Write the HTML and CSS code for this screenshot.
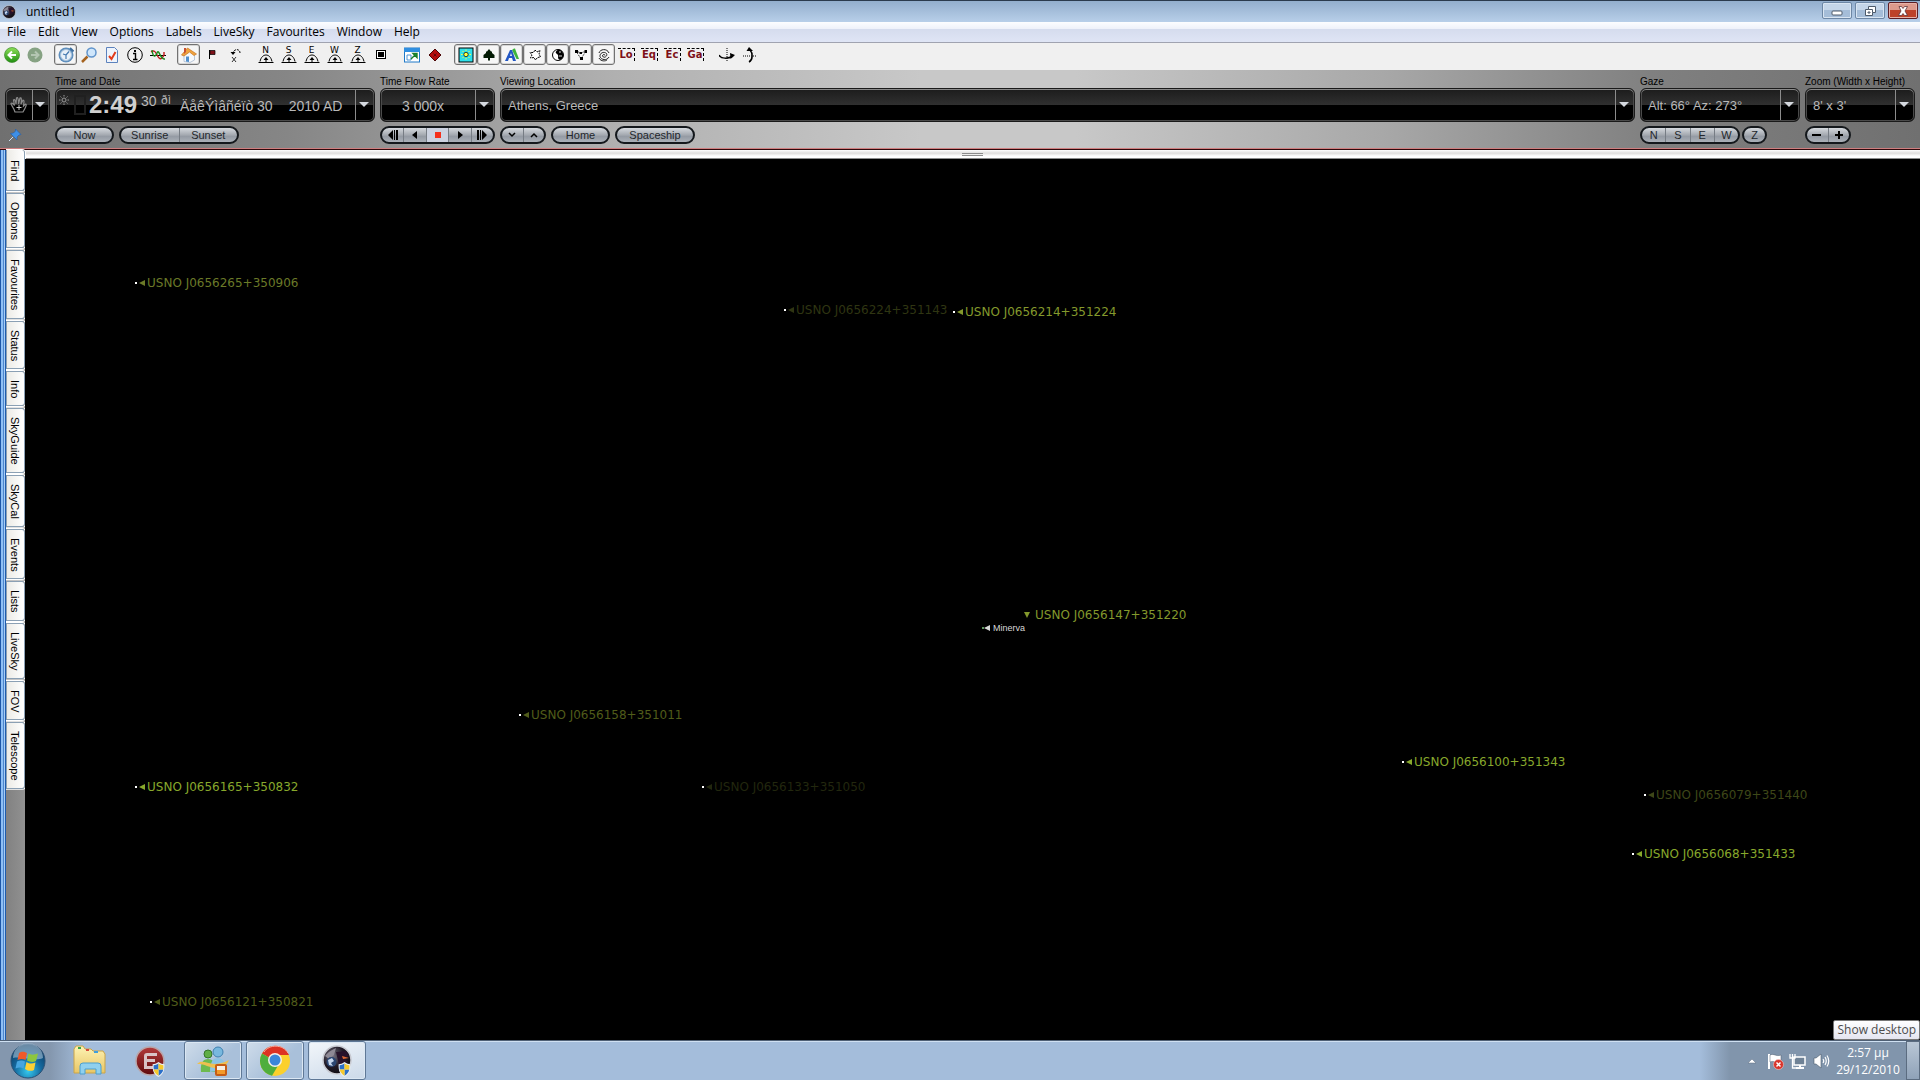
FILE: index.html
```html
<!DOCTYPE html>
<html lang="en">
<head>
<meta charset="utf-8">
<title>untitled1</title>
<link rel="stylesheet" href="styles.css">
</head>
<body>
<svg class="defs" width="0" height="0" aria-hidden="true">
  <defs>
    <linearGradient id="gGreen" x1="0" y1="0" x2="0" y2="1"><stop offset="0" stop-color="#8fe05a"/><stop offset="1" stop-color="#1f8f10"/></linearGradient>
    <radialGradient id="gOrb" cx=".5" cy=".8" r=".8"><stop offset="0" stop-color="#35c8ee"/><stop offset=".5" stop-color="#14679c"/><stop offset="1" stop-color="#0c3358"/></radialGradient>
    <radialGradient id="gPlanet" cx=".35" cy=".35" r=".8"><stop offset="0" stop-color="#75707e"/><stop offset=".5" stop-color="#201a26"/><stop offset="1" stop-color="#07060a"/></radialGradient>
    <linearGradient id="gFolder" x1="0" y1="0" x2="0" y2="1"><stop offset="0" stop-color="#fdf3b4"/><stop offset="1" stop-color="#e9c665"/></linearGradient>
    <linearGradient id="gRed" x1="0" y1="0" x2="0" y2="1"><stop offset="0" stop-color="#b33a3a"/><stop offset="1" stop-color="#5f0a0c"/></linearGradient>
    <symbol id="shield" viewBox="0 0 12 14"><path d="M6 0C4 1.500 2 2 0.500 2C0.300 8 1.500 11.500 6 14C10.500 11.500 11.700 8 11.500 2C10 2 8 1.500 6 0Z" fill="#e9eef3"/><path d="M6 1.500V7H1.600C1.400 5.500 1.400 4.500 1.500 3C3 3 4.500 2.500 6 1.500ZM6 7H10.400C10 9.500 8.500 11.500 6 12.800Z" fill="#2a6fc9"/><path d="M6 1.500V7H10.400C10.600 5.500 10.600 4.500 10.500 3C9 3 7.500 2.500 6 1.500ZM6 7H1.600C2 9.500 3.500 11.500 6 12.800Z" fill="#f6c92c"/></symbol>
    <symbol id="dome" viewBox="0 0 16 10"><path d="M.5 8.500H15.500M2 7.500C3 3 5.500 1 8 1S13 3 14 7.500" fill="none" stroke="#000"/><path d="M8 3L10.500 6H8.500V8H7.500V6H5.500Z"/></symbol>
    <symbol id="planet" viewBox="0 0 30 30"><circle cx="15" cy="15" r="14" fill="url(#gPlanet)" stroke="#c9cbd2" stroke-width="1.500"/><path d="M3 11C7 6 12 4 14 3L12 10L7 14Z" fill="#8e8995"/><path d="M14 7L24 6L27 11L22 13L26 17L17 20Z" fill="#27122a"/><path d="M20 11L27 13L21 14Z" fill="#e06a32"/><circle cx="9.500" cy="17" r="5" fill="#2b4672"/><path d="M6 15L10 13L12 16L9 18L11 21L7 20Z" fill="#c6d6ec"/></symbol>
  </defs>
</svg>
<div class="window">
  <header class="titlebar">
    <svg class="app-icon" viewBox="0 0 30 30"><use href="#planet"/></svg>
    <h1>untitled1</h1>
    <div class="caption">
      <button aria-label="Minimise"><svg viewBox="0 0 14 12"><rect x="2" y="6" width="10" height="4" rx="1" fill="#fff" stroke="#4e5b6b"/></svg></button>
      <button aria-label="Restore"><svg viewBox="0 0 14 12"><path d="M5.500 1.500H12.500V7.500H9.500V10.500H2.500V4.500H5.500Z" fill="#fff" stroke="#4e5b6b"/><path d="M5.500 4.500H9.500V7.500M5 7H7V8H5Z" fill="none" stroke="#4e5b6b"/></svg></button>
      <button class="close" aria-label="Close"><svg viewBox="0 0 14 12"><path d="M3 1.500H5.500L7 3.500L8.500 1.500H11.500L9 6L11.500 10.500H8.500L7 8.500L5.500 10.500H2.500L5 6Z" fill="#fff" stroke="#5e3438" stroke-width=".8"/></svg></button>
    </div>
  </header>
  <nav class="menu">
    <button>File</button><button>Edit</button><button>View</button><button>Options</button><button>Labels</button><button>LiveSky</button><button>Favourites</button><button>Window</button><button>Help</button>
  </nav>
  <div class="toolbar" role="toolbar">
    <div class="group">
      <button aria-label="Back"><svg viewBox="0 0 16 16"><circle cx="8" cy="8" r="7.500" fill="url(#gGreen)" stroke="#3d8a2b" stroke-width=".7"/><path d="M12 8H5M8 4.500L4.500 8L8 11.500" fill="none" stroke="#fff" stroke-width="2"/></svg></button>
      <button aria-label="Forward"><svg viewBox="0 0 16 16"><circle cx="8" cy="8" r="7.500" fill="#86a283"/><path d="M4 8H11M8 4.500L11.500 8L8 11.500" fill="none" stroke="#b4c6b2" stroke-width="2"/></svg></button>
    </div>
    <div class="group">
      <button class="on" aria-label="Time"><svg viewBox="0 0 16 16"><circle cx="8" cy="8" r="7.500" fill="#5f8fbd"/><circle cx="8" cy="8" r="5.500" fill="#e8f0f8" stroke="#a9c3dc"/><path d="M8 8L11 4.500M8 8L5 7M8 8V12" stroke="#4579b0" stroke-width="1.200"/><path d="M12 1L15.500 4.500" stroke="#3c6c9c" stroke-width="2"/></svg></button>
      <button aria-label="Search"><svg viewBox="0 0 16 16"><path d="M1 15L6.500 9.500" stroke="#a5631f" stroke-width="2.500"/><circle cx="10.500" cy="5.500" r="4.500" fill="#cfe6fb" stroke="#5f93cb" stroke-width="1.500"/></svg></button>
      <button aria-label="Check list"><svg viewBox="0 0 16 16"><path d="M2.500 .5H10.500L13.500 3.500V15.500H2.500Z" fill="#eef4fc" stroke="#5c82bd"/><path d="M5 9L7.500 12L11.500 5" fill="none" stroke="#e23c1c" stroke-width="2"/></svg></button>
      <button aria-label="Information"><svg viewBox="0 0 16 16"><circle cx="8" cy="8" r="7.300" fill="none" stroke="#000"/><path d="M6 6.500H8.500V12M6 12.500H10.500" stroke="#000" stroke-width="1.400" fill="none"/><rect x="7" y="3" width="2" height="2"/></svg></button>
      <button aria-label="Graph"><svg viewBox="0 0 16 16"><path d="M0 8.500H16" stroke="#000"/><path d="M1 5C4 3 5 4 7 8S11 14 14 8V5" fill="none" stroke="#c01818" stroke-width="1.400"/><path d="M2 3C3 10 5 11 7 6S10 13 15 12" fill="none" stroke="#1c8a1c" stroke-width="1.400"/></svg></button>
    </div>
    <div class="group">
      <button class="on" aria-label="Home view"><svg viewBox="0 0 16 16"><path d="M3 8V14.500L9 15.500L13.500 13V7L9 4Z" fill="#f6f8fb" stroke="#9fb3cb" stroke-width=".7"/><path d="M.5 8L6.500 1L15.500 7L13 8.500L8.500 5L3 9Z" fill="#f0a440" stroke="#c9741c" stroke-width=".7"/><path d="M3 1H5V5L3 7Z" fill="#c65034"/><path d="M5 9.500H8V15L5 14.500Z" fill="#5290cc"/></svg></button>
      <button aria-label="Flag"><svg viewBox="0 0 16 16"><path d="M5.500 3V12" stroke="#000"/><path d="M6 3.500H11V7.500H6Z" fill="#7d1018" stroke="#000" stroke-width=".7"/></svg></button>
      <button aria-label="Rotate"><svg viewBox="0 0 16 16"><path d="M13 6C13 1.500 7 1.500 6 6" fill="none" stroke="#000" stroke-dasharray="2 1"/><path d="M3.500 5H8.500L6 8Z"/><path d="M5 10L9 15M9 10L5 15" stroke="#000" stroke-width=".8"/></svg></button>
    </div>
    <div class="group compass">
      <button><span>N</span><svg viewBox="0 0 16 10"><use href="#dome"/></svg></button>
      <button><span>S</span><svg viewBox="0 0 16 10"><use href="#dome"/></svg></button>
      <button><span>E</span><svg viewBox="0 0 16 10"><use href="#dome"/></svg></button>
      <button><span>W</span><svg viewBox="0 0 16 10"><use href="#dome"/></svg></button>
      <button><span>Z</span><svg viewBox="0 0 16 10"><use href="#dome"/></svg></button>
      <button aria-label="Frame"><svg class="tall" viewBox="0 0 16 16"><rect x="3.500" y="3.500" width="9" height="8" fill="#fff" stroke="#000"/><rect x="5" y="5" width="6" height="5"/></svg></button>
    </div>
    <div class="group">
      <button aria-label="Full screen"><svg viewBox="0 0 16 16"><rect x=".5" y="1" width="15" height="14" fill="#fff" stroke="#1e79c8"/><rect x="0" y="1" width="16" height="4" fill="#2f8ee0"/><path d="M3 8H7V13H3Z" fill="#fff" stroke="#4c93d4"/><path d="M7 12L11 8M9 6.500H13V10.500Z" fill="#1a9c3a" stroke="#1a7c2a" stroke-width="1.400"/></svg></button>
      <button aria-label="Red marker"><svg viewBox="0 0 16 16"><path d="M8 2L14 8L8 14L2 8Z" fill="#b40d0d" stroke="#4c0505"/><path d="M6.500 6.500L9.500 9.500M9.500 6.500L6.500 9.500" stroke="#60080a"/></svg></button>
    </div>
    <div class="group">
      <button class="on" aria-label="Daylight"><svg viewBox="0 0 16 16"><rect x="1" y="1" width="14" height="14" fill="#2ee0ea" stroke="#000"/><circle cx="8" cy="7.500" r="2.200" fill="#ff4" stroke="#000" stroke-width=".7"/><path d="M8 2.500V4M8 11V12.500M3 7.500H4.500M11.500 7.500H13M4.500 4L5.500 5M10.500 10L11.500 11M11.500 4L10.500 5M5.500 10L4.500 11" stroke="#ff4"/></svg></button>
      <button class="on" aria-label="Horizon"><svg viewBox="0 0 16 16"><path d="M8 2L10 4.500H11V6L13.500 8V11H9V13.500H7V11H2.500V8L5 6V4.500H6Z" fill="#021a04"/></svg></button>
      <button class="on" aria-label="Labels"><svg viewBox="0 0 16 16"><path d="M8 3L10 1.500H11L15 12H12.500Z" fill="#3cb43c"/><path d="M1 14L6 3H8L12 14H9L8 11H5L4 14ZM6 9H8L7 6Z" fill="#2257c4" fill-rule="evenodd"/></svg></button>
      <button class="on" aria-label="Stars"><svg viewBox="0 0 16 16"><path d="M8 3L10 5L13 3.500L12 7L13.500 10L10.500 10.500L8.500 13L7 10.500L3.500 11L5 8L3 5.500L6.500 5.500Z" fill="#fff" stroke="#000" stroke-dasharray="2 .8"/></svg></button>
      <button class="on" aria-label="Planets"><svg viewBox="0 0 16 16"><circle cx="8" cy="8" r="5.500" fill="#fff" stroke="#000"/><path d="M8 2.500A5.500 5.500 0 0 1 10 13C6 11 10 9 7 7S7 4 8 2.500Z"/><path d="M9 5H11M9 9H12" stroke="#ddd"/></svg></button>
      <button class="on" aria-label="Constellations"><svg viewBox="0 0 16 16"><path d="M3 4L8 6L13 4L8 12Z" fill="none" stroke="#000" stroke-dasharray="1 1"/><path d="M2 3H5V6H2ZM11.500 3H14V6H11.500ZM6.500 5H9V7H6.500ZM7 10H10V13H7Z"/></svg></button>
      <button class="on" aria-label="Galaxies"><svg viewBox="0 0 16 16"><path d="M3 6C4 2 11 1 13 6M13 10C11 14 5 13 4 9.500C3.500 6 8 4 10.500 6.500C12 9 8 12 6.500 9C6.500 7 9 7 9 8.500M3 11C5 15 10 14 11 13" fill="none" stroke="#222"/></svg></button>
      <button class="grid-label">Lo</button>
      <button class="grid-label">Eq</button>
      <button class="grid-label">Ec</button>
      <button class="grid-label">Ga</button>
    </div>
    <div class="group">
      <button aria-label="Pan"><svg viewBox="0 0 16 16"><path d="M8 1V15" stroke="#000" stroke-dasharray="1 1"/><path d="M0 8C2 12 9 12 14 9" fill="none" stroke="#000" stroke-width="1.500"/><path d="M11 6L16 8L11.500 12Z"/></svg></button>
      <button aria-label="Tilt"><svg viewBox="0 0 16 16"><path d="M1 9H15" stroke="#000" stroke-dasharray="1 1"/><path d="M7 15C11 13 11 6 8 3" fill="none" stroke="#000" stroke-width="1.500"/><path d="M4.500 4L7 0L11 4Z"/></svg></button>
    </div>
  </div>

  <section class="panel">
    <div class="cell">
      <span class="label"></span>
      <div class="box">
        <div class="value hand"><svg viewBox="0 0 18 18"><path d="M5 16C4 12 1 9 1 7.500C2 6.500 3.500 8 4.500 9.500L3.500 4C4.500 3 5.500 4 6 8L6.500 2C7.500 1 8.500 2 8.500 8L10 2C11 1.500 12 2 11 8L13 4C14.500 4 14 6 13.500 10L15.500 8C17 8 16 11 13 16Z" fill="none" stroke="#8c8c8c" stroke-width="1.200"/><path d="M9 9V14M6.500 11.500H11.500" stroke="#c8c8c8"/></svg></div>
        <button class="drop" aria-label="Hand options"></button>
      </div>
      <div class="row"><svg class="pin" viewBox="0 0 14 14"><path d="M1 13L5.500 8.500" stroke="#cfe0f2"/><path d="M7.500 1L13 6.500L11 7L9 9L9 12L2.500 5.500L5.500 5L7.500 3Z" fill="#3e8fe6" stroke="#225ca8" stroke-width=".6"/></svg></div>
    </div>
    <div class="cell">
      <span class="label">Time and Date</span>
      <div class="box">
        <div class="value clock">
          <svg class="sun" viewBox="0 0 10 10"><circle cx="5" cy="5" r="2" fill="none" stroke="#999"/><path d="M5 0V1.500M5 8.500V10M0 5H1.500M8.500 5H10M1.500 1.500L2.500 2.500M7.500 7.500L8.500 8.500M8.500 1.500L7.500 2.500M2.500 7.500L1.500 8.500" stroke="#999"/></svg>
          <span class="ghost"></span><span class="hm">2:49</span><span class="sec">30</span><span class="ampm">ðì</span><span class="date">ÄåêÝìâñéïò 30</span><span class="date year">2010 AD</span>
        </div>
        <button class="drop" aria-label="Set time"></button>
      </div>
      <div class="row"><button class="pill w60">Now</button><div class="pills w120"><button>Sunrise</button><button>Sunset</button></div></div>
    </div>
    <div class="cell">
      <span class="label">Time Flow Rate</span>
      <div class="box"><div class="value rate">3 000x</div><button class="drop" aria-label="Set rate"></button></div>
      <div class="row"><div class="pills flow">
        <button aria-label="Step back"><svg viewBox="0 0 12 10"><path d="M6 0V10L1 5ZM7 0H8V10H7ZM9 0H11V10H9Z"/></svg></button>
        <button aria-label="Backward"><svg viewBox="0 0 12 10"><path d="M8 1V9L3 5Z"/></svg></button>
        <button class="stop" aria-label="Stop"><svg viewBox="0 0 12 10"><path d="M3 2H9V8H3Z" fill="#f5301c"/></svg></button>
        <button aria-label="Forward"><svg viewBox="0 0 12 10"><path d="M4 1V9L9 5Z"/></svg></button>
        <button aria-label="Step forward"><svg viewBox="0 0 12 10"><path d="M6 0V10L11 5ZM4 0H5V10H4ZM1 0H3V10H1Z"/></svg></button>
      </div></div>
    </div>
    <div class="cell">
      <span class="label">Viewing Location</span>
      <div class="box"><div class="value">Athens, Greece</div><button class="drop" aria-label="Set location"></button></div>
      <div class="row">
        <div class="pills w45">
          <button aria-label="Down"><svg viewBox="0 0 12 10"><path d="M3 3L6 6L9 3" fill="none" stroke="#000" stroke-width="1.500"/></svg></button>
          <button aria-label="Up"><svg viewBox="0 0 12 10"><path d="M3 7L6 4L9 7" fill="none" stroke="#000" stroke-width="1.500"/></svg></button>
        </div>
        <button class="pill w60">Home</button><button class="pill w80">Spaceship</button>
      </div>
    </div>
    <div class="cell">
      <span class="label">Gaze</span>
      <div class="box"><div class="value">Alt: 66° Az: 273°</div><button class="drop" aria-label="Set gaze"></button></div>
      <div class="row tight"><div class="pills w100"><button>N</button><button>S</button><button>E</button><button>W</button></div><button class="pill w25">Z</button></div>
    </div>
    <div class="cell">
      <span class="label">Zoom (Width x Height)</span>
      <div class="box"><div class="value">8' x 3'</div><button class="drop" aria-label="Set zoom"></button></div>
      <div class="row"><div class="pills w45">
        <button aria-label="Zoom out"><svg viewBox="0 0 12 10"><path d="M1 5H10" stroke="#000" stroke-width="2"/></svg></button>
        <button aria-label="Zoom in"><svg viewBox="0 0 12 10"><path d="M2 5H10M6 1V9" stroke="#000" stroke-width="2"/></svg></button>
      </div></div>
    </div>
  </section>

  <main class="body">
    <aside class="side">
      <button>Find</button><button>Options</button><button>Favourites</button><button>Status</button><button>Info</button><button>SkyGuide</button><button>SkyCal</button><button>Events</button><button>Lists</button><button>LiveSky</button><button>FOV</button><button>Telescope</button>
    </aside>
    <div class="view">
      <div class="splitter"><i></i></div>
      <div class="sky">
        <div class="star m2" style="left:110px;top:123px"><i></i><b></b>USNO J0656265+350906</div>
        <div class="star m5" style="left:759px;top:150px"><i></i><b></b>USNO J0656224+351143</div>
        <div class="star m1" style="left:928px;top:152px"><i></i><b></b>USNO J0656214+351224</div>
        <div class="star m1 below" style="left:999px;top:455px"><b></b>USNO J0656147+351220</div>
        <div class="star minerva" style="left:957px;top:468px"><i></i><b></b>Minerva</div>
        <div class="star m3" style="left:494px;top:555px"><i></i><b></b>USNO J0656158+351011</div>
        <div class="star m0" style="left:110px;top:627px"><i></i><b></b>USNO J0656165+350832</div>
        <div class="star m6" style="left:677px;top:627px"><i></i><b></b>USNO J0656133+351050</div>
        <div class="star m0" style="left:1377px;top:602px"><i></i><b></b>USNO J0656100+351343</div>
        <div class="star m4" style="left:1619px;top:635px"><i></i><b></b>USNO J0656079+351440</div>
        <div class="star m0" style="left:1607px;top:694px"><i></i><b></b>USNO J0656068+351433</div>
        <div class="star m3" style="left:125px;top:842px"><i></i><b></b>USNO J0656121+350821</div>
        <div class="tooltip" role="tooltip">Show desktop</div>
      </div>
    </div>
  </main>
</div>
<footer class="taskbar">
  <button aria-label="Start"><svg viewBox="0 0 36 36"><circle cx="18" cy="18" r="17" fill="url(#gOrb)" stroke="#2a4f74"/><path d="M3 15A15 15 0 0 1 33 15C24 19 12 13 3 15Z" fill="#b8d0e2" opacity=".55"/><path d="M9 10C12 8 14 8.500 17 10L15.500 17C13 15.500 11 15.500 7.500 17Z" fill="#f0592a"/><path d="M18.500 10.500C21 12 24 12 28 10.500L26 18C23 19.500 20 19 17 17.500Z" fill="#8dc63f"/><path d="M7 18.500C10 17 12.500 17 15 18.500L13.500 25.500C11 24 9 24 5.500 25.500Z" fill="#45a5e0"/><path d="M16.500 19C19.500 21 22 21 25.500 19.500L24 27C21 28.500 18 28 15 26Z" fill="#fdd034"/></svg></button>
  <button aria-label="Explorer"><svg viewBox="0 0 36 36"><path d="M3 6L5 3H12L14 6H20L22 8H32L34 11V30H3Z" fill="url(#gFolder)" stroke="#c9a44a"/><path d="M7 4H10V6H7Z" fill="#3aa547"/><path d="M15 6H18V8H15Z" fill="#d84a38"/><path d="M23 8H27V10H23Z" fill="#3f9fdc"/><path d="M9 31V23Q9 20 12 20H27Q30 20 30 23V31H25V26H14V31Z" fill="#8fd0ee" stroke="#4a9fd0"/></svg></button>
  <button aria-label="E program"><svg viewBox="0 0 36 36"><circle cx="17" cy="18" r="14" fill="url(#gRed)" stroke="#b9a6aa" stroke-width="1.500"/><path d="M24 10H14Q11 10 11 13V26H14V19H22V16H14V13H24ZM14 23H23V26H14Z" fill="#d9c3c5"/><use href="#shield" x="19" y="19" width="13" height="15"/></svg></button>
  <button class="running" aria-label="Messenger"><svg viewBox="0 0 36 36"><circle cx="13" cy="11" r="4" fill="#5fae46" stroke="#36762b"/><path d="M6 29C5 20 8 16 13 16S21 20 20 29Z" fill="#6dba50"/><circle cx="23" cy="9" r="5" fill="#78b8de" stroke="#3f80b0"/><path d="M15 29C15 19 18 15 23 15S31 20 30 27Z" fill="#8cc4e4"/><path d="M2 21C9 14 15 27 34 17C30 27 20 26 12 23C7 21 5 21 2 21Z" fill="#eec050"/><rect x="21" y="22" width="10" height="10" rx="1" fill="#f6efe4" stroke="#c55c16" stroke-width="2"/><rect x="22" y="27" width="8" height="4" fill="#f39a2a"/></svg></button>
  <button class="running" aria-label="Chrome"><svg viewBox="0 0 36 36"><circle cx="18" cy="18" r="15" fill="#fbd02c"/><path d="M18 18L5 10.500A15 15 0 0 1 32 12H18Z" fill="#dd3222"/><path d="M18 18L5 10.500A15 15 0 0 0 15 32.700L22 21Z" fill="#4fae3c"/><path d="M7 9C12 1 26 1 31 10" stroke="#f5b1a5" fill="none"/><circle cx="18" cy="17" r="7" fill="#f4f0e6"/><circle cx="18" cy="17" r="5.500" fill="#3c86d8"/></svg></button>
  <button class="running active" aria-label="untitled1"><svg viewBox="0 0 36 36"><use href="#planet" x="3" y="2" width="30" height="30"/><use href="#shield" x="19" y="19" width="13" height="15"/></svg></button>
  <div class="tray">
    <button aria-label="Show hidden icons"><svg viewBox="0 0 18 18"><path d="M5 11L9 7L13 11Z" fill="#fff" stroke="#5c6d80" stroke-width=".5"/></svg></button>
    <button aria-label="Action centre"><svg viewBox="0 0 18 18"><path d="M3 2V17" stroke="#fff" stroke-width="2"/><path d="M4 3C8 1 10 5 15 3V10C10 12 8 8 4 10Z" fill="#fff" stroke="#4c5b6c" stroke-width=".5"/><circle cx="12.500" cy="12.500" r="5" fill="#d8342c" stroke="#f1c9c5" stroke-width=".6"/><path d="M10.500 10.500L14.500 14.500M14.500 10.500L10.500 14.500" stroke="#fff" stroke-width="1.500"/></svg></button>
    <button aria-label="Network"><svg viewBox="0 0 18 18"><rect x="5" y="5" width="11" height="8" fill="#6f8296" stroke="#fff" stroke-width="1.500"/><path d="M7 16H15M11 13V16" stroke="#fff" stroke-width="2"/><path d="M1 2V6H6V2M3.500 2V16H7" stroke="#fff" fill="none" stroke-width="1.300"/></svg></button>
    <button aria-label="Volume"><svg viewBox="0 0 18 18"><path d="M2 6H4L9 2V16L4 12H2Z" fill="#fff" stroke="#4c5b6c" stroke-width=".6"/><path d="M11 7Q12.500 9 11 11M13 5Q15.500 9 13 13M15 3.500Q18.500 9 15 14.500" fill="none" stroke="#fff" stroke-width="1.200"/></svg></button>
    <div class="time"><span>2:57 μμ</span><span>29/12/2010</span></div>
    <button class="show-desktop" aria-label="Show desktop"></button>
  </div>
</footer>
</body>
</html>
```
FILE: styles.css
```css
* { box-sizing: border-box; }
body {
  margin: 0;
  min-height: 100vh;
  display: flex;
  flex-direction: column;
  background: #000;
  font-family: "Liberation Sans", sans-serif;
  color: #000;
  overflow: hidden;
}
button { margin: 0; padding: 0; border: 0; background: none; font: inherit; color: inherit; }
svg { display: block; }
.defs { position: absolute; }
.window { flex: 1; display: flex; flex-direction: column; }

/* title and menu */
.titlebar {
  height: 22px;
  display: flex;
  align-items: center;
  padding: 0 2px;
  border-top: 1px solid #2b3a4d;
  background: linear-gradient(#93aecd, #b8cfe9);
}
.app-icon { width: 14px; height: 14px; }
.titlebar h1 {
  flex: 1;
  margin: 0;
  padding-left: 10px;
  font: 12px/20px "Open Sans", "Noto Sans", sans-serif;
}
.caption { display: flex; gap: 3px; align-self: flex-start; padding-top: 1px; }
.caption button {
  width: 30px;
  height: 17px;
  display: grid;
  place-items: center;
  border: 1px solid #6d87a5;
  border-radius: 2px;
  background: linear-gradient(#c5d6e9 50%, #a5bdd8 50%);
  box-shadow: inset 0 0 0 1px #d9e5f2;
}
.caption svg { width: 14px; height: 12px; }
.caption .close {
  border-color: #5d1e24;
  background: linear-gradient(#dd9a8c 50%, #bd4229 50%);
  box-shadow: inset 0 0 0 1px #e6b2a8;
}
.menu {
  height: 21px;
  display: flex;
  padding: 0 1px 1px;
  border-bottom: 1px solid #a0a3b0;
  background: linear-gradient(#fcfdff, #eef1fa 35%, #d5dcee 36%, #dfe5f5);
  font: 12px/19px "Open Sans", "Noto Sans", sans-serif;
}
.menu button { padding: 0 6px; }

/* icon toolbar */
.toolbar {
  height: 27px;
  display: flex;
  gap: 8px;
  padding-top: 1px;
  background: #f0f0f0;
}
.group { display: flex; }
.group button { width: 23px; height: 21px; display: grid; place-items: center; border-radius: 3px; }
.group svg { width: 16px; height: 16px; }
.group .on { border: 1px solid #727272; background: #f6f6f6; box-shadow: inset 0 0 0 1px #d5d5d5; }
.compass button { align-content: center; font: 9px/8px "DejaVu Sans", sans-serif; }
.compass svg { width: 16px; height: 10px; }
.compass .tall { height: 16px; }
.group .grid-label {
  width: 17px;
  height: 13px;
  margin: 4px 3px;
  border-top: 1px dashed #000;
  border-right: 1px dashed #000;
  border-radius: 0;
  font: bold 10px/12px "DejaVu Sans", sans-serif;
  color: #7d1018;
}

/* control panel */
.panel {
  display: grid;
  grid-template-columns: 45px 320px 115px 1fr 160px 110px;
  gap: 5px;
  padding: 6px 5px 5px;
  border-bottom: 1px solid #32090c;
  background: linear-gradient(90deg, #707070, #868686 15%, #b0b0b0 32%, #c8c8c8 48%, #c8c8c8 56%, #a8a8a8 72%, #808080 86%, #707070);
  box-shadow: inset 0 -1px #cf7f80;
}
.cell { display: flex; flex-direction: column; min-width: 0; }
.label { height: 12px; font-size: 10px; line-height: 12px; white-space: nowrap; }
.box {
  height: 34px;
  display: flex;
  border: 1px solid #1a1a1a;
  border-radius: 6px;
  background: linear-gradient(#1c1c1c, #303030 50%, #000 50%);
  box-shadow: inset 0 1px #8a8a8a, inset 0 0 0 1px #4a4a4a;
  color: #b8b8b8;
  font-size: 13px;
}
.value { flex: 1; display: flex; align-items: center; padding: 1px 7px 0; white-space: nowrap; }
.drop { width: 19px; margin: 1px 0; border-left: 1px solid #8c8c8c; display: grid; place-items: center; padding: 0 2px 2px 0; }
.drop::before { content: ""; border: 5px solid transparent; border-top: 5px solid #d4d8de; border-bottom: 0; }
.hand { padding: 0 4px; }
.hand svg { width: 18px; height: 18px; }
.rate { padding-left: 21px; font-size: 14px; }
.clock { align-items: flex-start; padding: 5px 3px 0; }
.sun { width: 10px; height: 10px; margin-top: 1px; }
.ghost { width: 12px; height: 20px; margin: 1px 3px 0 5px; border: 2px solid #202020; }
.hm { width: 48px; font: bold 24px/22px "Liberation Sans", sans-serif; color: #d0d0d0; }
.sec { width: 24px; padding-left: 4px; font-size: 14px; line-height: 14px; }
.ampm { width: 19px; font-size: 12px; line-height: 12px; }
.date { font-size: 14px; line-height: 24px; }
.year { margin-left: 16px; }
.row { display: flex; gap: 5px; padding-top: 4px; }
.row.tight { gap: 2px; }
.pin { width: 14px; height: 14px; margin: 2px 3px; }
.pill, .pills {
  height: 18px;
  border: 2px solid #14181c;
  border-radius: 9px;
  background: linear-gradient(#d5d9de, #a4a9b0 50%, #959ba4 60%, #aab0b8);
  font-size: 11px;
  line-height: 14px;
  color: #23272c;
}
.pills { display: flex; overflow: hidden; }
.pills button { flex: 1; display: grid; place-items: center; }
.pills button + button { border-left: 1px solid #767c84; }
.pills svg { width: 12px; height: 10px; }
.stop { background: #ccd2e0; }
.w25 { width: 25px; }
.w45 { width: 46px; }
.w60 { width: 59px; }
.w80 { width: 80px; }
.w100 { width: 100px; }
.w120 { width: 120px; }
.flow { width: 115px; }

/* side tabs and sky */
.body { flex: 1; display: flex; }
.side {
  width: 25px;
  display: flex;
  flex-direction: column;
  gap: 2px;
  padding-left: 6px;
  background:
    linear-gradient(90deg, #1c57a8 1px, #8fc0f5 1px 3px, #4d86cc 3px 4px, #a6cdf7 4px 5px, #1e5cae 5px) 0 0 / 6px 100% no-repeat,
    linear-gradient(90deg, #7c7c7c, #919191);
}
.side button {
  padding: 8px 2px 7px 0;
  border: 1px solid #8ba0b4;
  border-radius: 0 3px 3px 0;
  background: linear-gradient(90deg, #ecebe6, #fff);
  box-shadow: 0 0 0 1px #fff;
  clip-path: inset(-1px -1px -1px 0);
  writing-mode: vertical-rl;
  font-size: 11px;
  line-height: 14px;
  text-align: left;
}
.side button:first-child { border-top: 0; padding: 10px 2px 9px 0; }
.view { flex: 1; display: flex; flex-direction: column; min-width: 0; }
.splitter {
  height: 9px;
  display: grid;
  place-items: center;
  border-bottom: 1px solid #8c8c8c;
  background: linear-gradient(#fff, #e0dedd 40%, #fff 75%);
}
.splitter i { width: 21px; height: 3px; border: solid #8c8c8c; border-width: 1px 0; }
.sky { flex: 1; position: relative; overflow: hidden; background: #000; }
.star {
  position: absolute;
  display: flex;
  align-items: center;
  font: 12px/14px "DejaVu Sans", sans-serif;
  height: 1px;
  white-space: pre;
}
.star i { width: 2px; height: 2px; margin-right: 2px; background: #fff; }
.star b { margin-right: 2px; border: 3px solid transparent; border-left: 0; border-right: 6px solid currentColor; }
.star.below b { margin-right: 5px; border: 3px solid transparent; border-top: 6px solid currentColor; border-bottom: 0; }
.star.minerva { font: 9px/10px "Liberation Sans", sans-serif; color: #d8d8d8; }
.minerva i { margin-right: 0; background: #5f9a5f; }
.minerva b { margin-right: 3px; }
.m0 { color: #88a82c; }
.m1 { color: #84992c; }
.m2 { color: #6b7a28; }
.m3 { color: #505c1a; }
.m4 { color: #3e4718; }
.m5 { color: #2f3512; }
.m6 { color: #22270e; }
.tooltip {
  position: absolute;
  right: 0;
  bottom: 0;
  padding: 0 3px;
  border: 1px solid #767676;
  border-radius: 2px;
  background: linear-gradient(#fff, #e4e5f0);
  font: 12px/18px "Open Sans", "Noto Sans", sans-serif;
  color: #4c4c4c;
}

/* taskbar */
.taskbar {
  height: 40px;
  display: flex;
  align-items: stretch;
  gap: 4px;
  border-top: 1px solid #4f6075;
  box-shadow: inset 0 1px #cfe0f2;
  background: linear-gradient(90deg, #8497ae 50px, #a4bddb 84px, #a4bddb calc(100% - 220px), #8195ac calc(100% - 190px));
}
.taskbar > button { width: 58px; display: grid; place-items: center; }
.taskbar > button:first-child { width: 56px; }
.taskbar > button svg { width: 36px; height: 36px; }
.taskbar .running {
  border: 1px solid #5f7896;
  border-radius: 3px;
  background: linear-gradient(135deg, #cfdcea, #a9c0da 60%);
  box-shadow: inset 0 0 0 1px #dbe7f3;
}
.taskbar .active { background: linear-gradient(160deg, #f2f6fa, #cbd9e9); }
.tray { margin-left: auto; display: flex; align-items: center; gap: 5px; color: #fff; }
.tray svg { width: 18px; height: 18px; }
.time { width: 66px; display: grid; text-align: center; font: 12px/17px "Open Sans", "Noto Sans", sans-serif; }
.show-desktop {
  width: 14px;
  align-self: stretch;
  border: 1px solid #5b6c80;
  background: linear-gradient(#b9c7d6, #8fa2b8);
}
```
